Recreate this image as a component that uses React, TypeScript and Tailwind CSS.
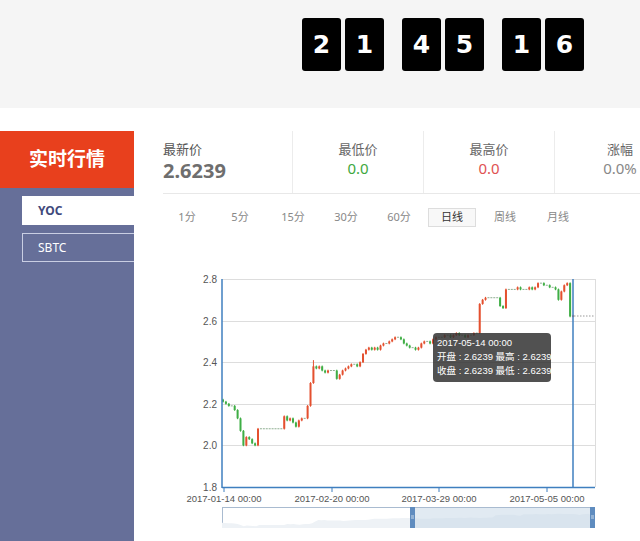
const closes = [
  2.21, 2.2, 2.19, 2.19, 2.17, 2.13, 2.07, 2.0, 2.04, 2.03,
  2.01, 2.0, 2.08, 2.08, 2.08, 2.08, 2.08, 2.08, 2.08, 2.08,
  2.08, 2.14, 2.12, 2.13, 2.11, 2.09, 2.12, 2.13, 2.13, 2.19,
  2.3, 2.38, 2.37, 2.38, 2.36, 2.35, 2.36, 2.36, 2.36, 2.32,
  2.34, 2.36, 2.37, 2.38, 2.39, 2.39, 2.38, 2.4, 2.44, 2.46,
  2.47, 2.46, 2.47, 2.46, 2.48, 2.49, 2.49, 2.5, 2.51, 2.52,
  2.52, 2.51, 2.49, 2.48, 2.47, 2.47, 2.46, 2.47, 2.49, 2.5,
  2.5, 2.49, 2.51, 2.52, 2.52, 2.52, 2.53, 2.53, 2.52, 2.53,
  2.54, 2.53, 2.53, 2.52, 2.53, 2.53, 2.54, 2.54, 2.68, 2.7,
  2.71, 2.71, 2.71, 2.71, 2.71, 2.67, 2.66, 2.75, 2.75, 2.75,
  2.75, 2.76, 2.75, 2.75, 2.75, 2.76, 2.75, 2.76, 2.78, 2.78,
  2.77, 2.77, 2.76, 2.76, 2.75, 2.7, 2.74, 2.77, 2.78, 2.62,
  2.6239,
];

const py = (p: number) => 279 + (2.8 - p) * 208;
const px = (d: number) => 223 + d * 2.917;

const digits = [
  ['2', '1'],
  ['4', '5'],
  ['1', '6'],
];

const tabs = ['1分', '5分', '15分', '30分', '60分', '日线', '周线', '月线'];

const yTicks = [
  { label: '2.8', y: 279 },
  { label: '2.6', y: 321 },
  { label: '2.4', y: 362 },
  { label: '2.2', y: 404 },
  { label: '2.0', y: 445 },
  { label: '1.8', y: 487 },
];

const xTicks = [
  { label: '2017-01-14 00:00', x: 224 },
  { label: '2017-02-20 00:00', x: 332 },
  { label: '2017-03-29 00:00', x: 439 },
  { label: '2017-05-05 00:00', x: 547 },
];

function Candles() {
  return (
    <g>
      {closes.map((c, i) => {
        const o = i === 0 ? 2.22 : closes[i - 1];
        const x = px(i);
        if (Math.abs(c - o) < 0.0001) {
          return <rect key={i} x={x - 1} y={py(c) - 0.5} width={2} height={1} fill="#8fae92" />;
        }
        const up = c > o;
        const color = up ? '#e4502f' : '#3fae45';
        const hi = Math.max(o, c);
        const lo = Math.min(o, c);
        const wickTop = i === 31 ? 2.41 : hi + 0.004;
        return (
          <g key={i}>
            <line x1={x} x2={x} y1={py(wickTop)} y2={py(lo - 0.004)} stroke={color} strokeWidth={1} />
            <rect x={x - 1} y={py(hi)} width={2} height={Math.max(1, py(lo) - py(hi))} fill={color} />
          </g>
        );
      })}
    </g>
  );
}

function Slider() {
  const pts = closes.map((c, i) => `${222 + (i / 120) * 373},${527 - (c - 1.95) * 16}`);
  const area = `M222,528 L${pts.join(' L')} L595,528 Z`;
  return (
    <g>
      <rect x={222.5} y={507.5} width={372} height={20} fill="#ffffff" stroke="#a9bbd0" />
      <path d={area} fill="#eef2f6" />
      <rect x={413} y={508} width={178} height={20} fill="#c9d9e8" opacity={0.55} />
      <rect x={410} y={507} width={5} height={21} fill="#5f8cbf" />
      <rect x={590} y={507} width={5} height={21} fill="#5f8cbf" />
      <line x1={411} x2={414} y1={516} y2={516} stroke="#c8d8ea" />
      <line x1={411} x2={414} y1={518} y2={518} stroke="#c8d8ea" />
      <line x1={591} x2={594} y1={516} y2={516} stroke="#c8d8ea" />
      <line x1={591} x2={594} y1={518} y2={518} stroke="#c8d8ea" />
    </g>
  );
}

function KChart() {
  return (
    <div className="relative mt-[8px] h-[306px] w-[506px]">
      <svg width={506} height={306} viewBox="134 235 506 306" className="block">
        {yTicks.slice(0, 5).map((t) => (
          <line key={t.label} x1={222} x2={595} y1={t.y + 0.5} y2={t.y + 0.5} stroke="#dddddd" />
        ))}
        <line x1={595.5} x2={595.5} y1={279} y2={487} stroke="#dddddd" />
        {yTicks.map((t) => (
          <text
            key={t.label}
            x={217}
            y={t.y + 3.5}
            textAnchor="end"
            fontSize={10}
            fill="#555"
            fontFamily="'Liberation Sans', Arial, sans-serif"
          >
            {t.label}
          </text>
        ))}
        <Candles />
        <line x1={574} x2={595} y1={316} y2={316} stroke="#999" strokeDasharray="1.5 1.5" />
        <line x1={573} x2={573} y1={279} y2={487} stroke="#3f7fbf" strokeWidth={1.5} />
        <line x1={222} x2={222} y1={279} y2={488} stroke="#3f7fbf" strokeWidth={1.5} />
        <line x1={222} x2={595} y1={487.5} y2={487.5} stroke="#3f7fbf" strokeWidth={1.5} />
        {xTicks.map((t) => (
          <g key={t.label}>
            <line x1={t.x} x2={t.x} y1={487} y2={492} stroke="#3f7fbf" />
            <text
              x={t.x}
              y={501.5}
              textAnchor="middle"
              fontSize={9.5}
              fill="#555"
              fontFamily="'Liberation Sans', Arial, sans-serif"
            >
              {t.label}
            </text>
          </g>
        ))}
        <Slider />
      </svg>
      <div className="absolute left-[299px] top-[98px] w-[118px] h-[49px] rounded-[4px] bg-[rgba(50,50,50,0.85)] px-[4px] pt-[3px] text-[9.5px] leading-[14px] text-white whitespace-nowrap font-['Liberation_Sans','Noto_Sans_CJK_SC',sans-serif]">
        <div>2017-05-14 00:00</div>
        <div>开盘 : 2.6239 最高 : 2.6239</div>
        <div>收盘 : 2.6239 最低 : 2.6239</div>
      </div>
    </div>
  );
}

function Stat({ label, value, color }: { label: string; value: string; color: string }) {
  return (
    <div className="w-[131px] shrink-0 border-l border-[#ececec] pt-[9px] text-center">
      <div className="text-[13px] leading-[18px] text-[#666]">{label}</div>
      <div className={`text-[15px] leading-[20px] ${color}`}>{value}</div>
    </div>
  );
}

export default function App() {
  return (
    <div className="w-[640px] h-[541px] overflow-hidden bg-white font-['Noto_Sans','Noto_Sans_CJK_SC',sans-serif]">
      {/* countdown header */}
      <div className="h-[108px] bg-[#f5f5f5] pt-[18px] pl-[302px] flex gap-[18px]">
        {digits.map((pair, i) => (
          <div key={i} className="flex gap-[4px]">
            {pair.map((d, j) => (
              <div
                key={j}
                className="w-[39px] h-[53px] rounded-[3px] bg-black flex items-center justify-center text-white text-[25px] font-bold font-['DejaVu_Sans',sans-serif]"
              >
                {d}
              </div>
            ))}
          </div>
        ))}
      </div>
      <div className="h-[23px]" />

      <div className="flex h-[410px]">
        {/* sidebar */}
        <div className="w-[134px] shrink-0 flex flex-col">
          <div className="h-[57px] bg-[#e8401d] flex items-center justify-center text-white text-[19px] font-bold">
            实时行情
          </div>
          <div className="flex-1 bg-[#666f99] pt-[8px] pl-[22px] flex flex-col gap-[8px]">
            <div className="h-[29px] bg-white flex items-center pl-[16px] text-[12px] font-bold text-[#3f4a7c]">YOC</div>
            <div className="h-[29px] border border-[#c9cee3] border-r-0 flex items-center pl-[15px] text-[12px] text-white">SBTC</div>
          </div>
        </div>

        {/* main */}
        <div className="flex-1 min-w-0">
          <div className="ml-[29px] h-[63px] border-b border-[#e8e8e8] flex">
            <div className="w-[129px] shrink-0 pt-[9px]">
              <div className="text-[13px] leading-[18px] text-[#555]">最新价</div>
              <div className="text-[20px] leading-[26px] font-bold text-[#6e6e6e]">2.6239</div>
            </div>
            <Stat label="最低价" value="0.0" color="text-[#3ea83e]" />
            <Stat label="最高价" value="0.0" color="text-[#e05252]" />
            <Stat label="涨幅" value="0.0%" color="text-[#888]" />
          </div>

          <div className="ml-[29px] mt-[14px] flex gap-[5px]">
            {tabs.map((t) => (
              <div
                key={t}
                className={
                  t === '日线'
                    ? 'w-[48px] h-[19px] border border-[#dddddd] bg-[#f8f8f8] flex items-center justify-center text-[11px] text-[#333]'
                    : 'w-[48px] h-[19px] border border-transparent flex items-center justify-center text-[11px] text-[#888]'
                }
              >
                {t}
              </div>
            ))}
          </div>

          <KChart />
        </div>
      </div>
    </div>
  );
}
